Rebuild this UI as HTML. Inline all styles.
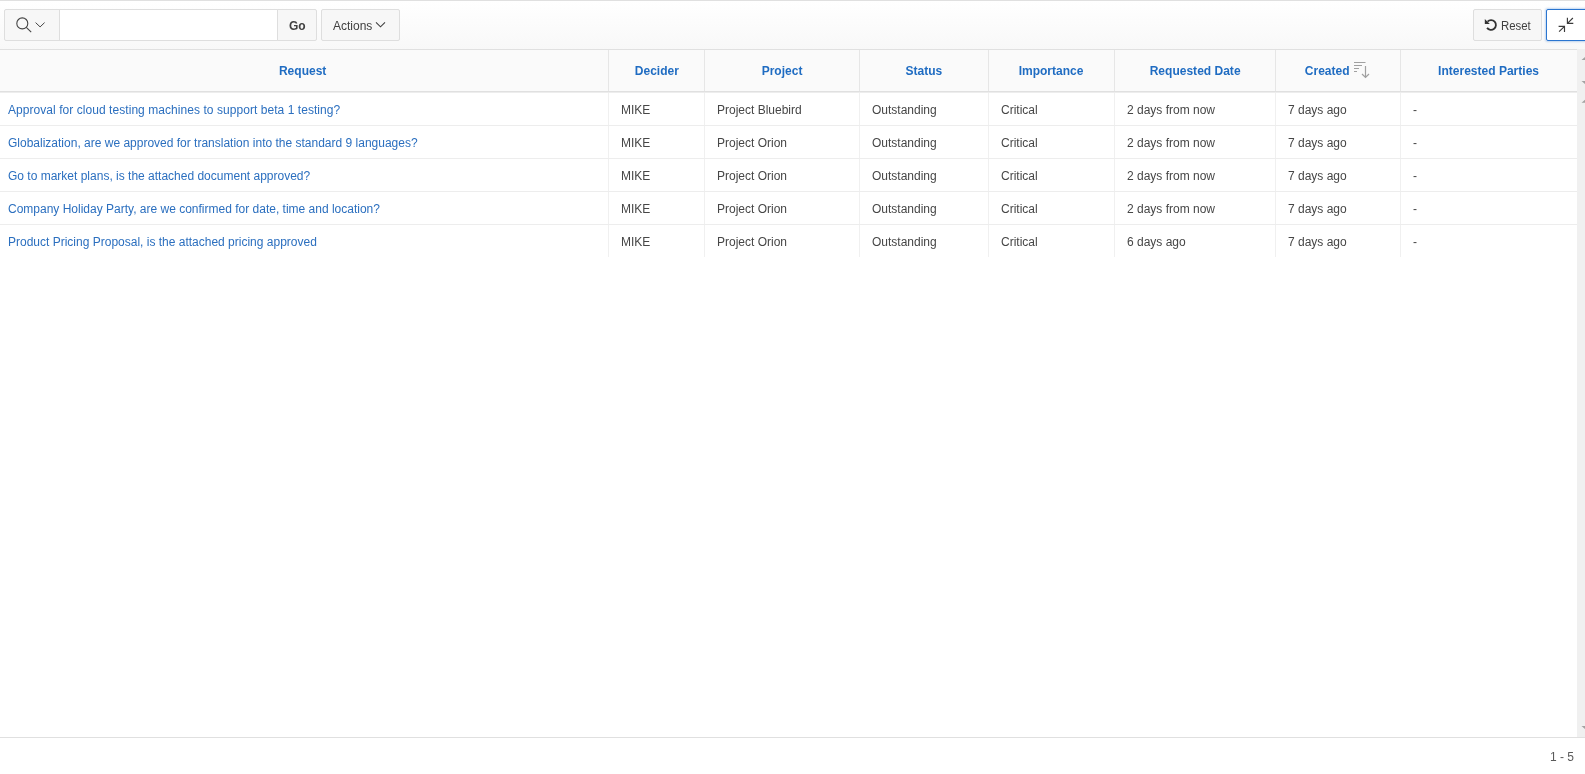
<!DOCTYPE html>
<html><head><meta charset="utf-8">
<style>
*{box-sizing:border-box;margin:0;padding:0}
html,body{width:1585px;height:774px;overflow:hidden;background:#fff;font-family:"Liberation Sans",sans-serif;color:#404040}
.abs{position:absolute}
#topline{left:0;top:0;width:1585px;height:1px;background:#e0e0e0}
#toolbar{left:0;top:1px;width:1585px;height:48px;background:linear-gradient(#fff,#f8f8f8)}
.btn{position:absolute;top:9px;height:32px;border:1px solid #dedede;background:#f7f7f7;border-radius:2px}
#hdrline{left:0;top:49px;width:1577px;height:1px;background:#e0e0e0}
#hdr{left:0;top:50px;width:1577px;height:41px;background:#fafafa}
#hdrbot{left:0;top:91px;width:1577px;height:2px;background:linear-gradient(#e0e0e0 50%,#ededed 50%)}
.th{position:absolute;top:50px;height:41px;font-weight:bold;font-size:13px;color:#1f6cc2;line-height:41px;text-align:center;white-space:nowrap}
.tht{display:inline-block;transform:scaleX(0.925)}
.sorticon{position:absolute;left:1350px;top:58px}
.vl{position:absolute;width:1px;background:#f0f0f0}
.vlh{background:#e6e6e6}
.hl{position:absolute;height:1px;background:#ededed;left:0;width:1577px}
.td{position:absolute;font-size:12px;white-space:nowrap;line-height:32px;color:#464646}
.lnk{color:#2b6fbf}
#sb1{left:1577px;top:49px;width:8px;height:43px;background:#f0f0f0}
#sb2{left:1577px;top:92px;width:8px;height:645px;background:#f0f0f0}
#footline{left:0;top:737px;width:1585px;height:1px;background:#e0e0e0}
.btxt{font-size:12px;line-height:32px;color:#404040;white-space:nowrap}
.sx{display:inline-block;transform:scaleX(0.9);transform-origin:0 50%}
#wrap{position:absolute;left:0;top:0;width:1585px;height:774px;overflow:hidden;will-change:transform}
</style></head><body><div id="wrap">
<div class="abs" id="topline"></div>
<div class="abs" id="toolbar"></div>
<div class="btn" style="left:4px;width:57px;border-radius:2px 0 0 2px"></div>
<svg class="abs" style="left:14px;top:15px" width="34" height="20" viewBox="14 15 34 20"><circle cx="22.3" cy="23.4" r="5.5" fill="none" stroke="#444" stroke-width="1.1"/><path d="M26.3 27.4L31.2 32.1" stroke="#444" stroke-width="1.1"/><path d="M35.6 22.6L40.1 26.9L44.6 22.6" fill="none" stroke="#444" stroke-width="1"/></svg>
<div class="abs" style="left:59px;top:9px;width:219px;height:32px;background:#fff;border:1px solid #dedede;border-right:0"></div>
<div class="btn" style="left:277px;width:40px;border-radius:0 2px 2px 0"></div>
<div class="abs btxt" style="left:289px;top:10px;font-weight:bold">Go</div>
<div class="btn" style="left:321px;width:79px"></div>
<div class="abs btxt" style="left:333px;top:10px">Actions</div>
<svg class="abs" style="left:374px;top:20px" width="14" height="10" viewBox="374 20 14 10"><path d="M376 22.3L380.5 26.8L385 22.3" fill="none" stroke="#404040" stroke-width="1.1"/></svg>
<div class="btn" style="left:1473px;width:69px"></div>
<svg class="abs" style="left:1482px;top:16px" width="18" height="18" viewBox="1482 16 18 18"><path d="M1487.54 21.54A4.9 4.9 0 1 1 1487.04 27.88" fill="none" stroke="#333" stroke-width="1.8"/><path d="M1484.8 19L1484.8 24L1489.8 24Z" fill="#333"/></svg>
<div class="abs btxt" style="left:1501px;top:10px"><span class="sx" style="transform:scaleX(0.95)">Reset</span></div>
<div class="btn" style="left:1546px;width:50px;border-color:#2a75d0;background:#fff;box-shadow:0 0 2px 1px rgba(42,117,208,0.28)"></div>
<svg class="abs" style="left:1554px;top:14px" width="24" height="22" viewBox="1554 14 24 22"><path d="M1567.4 17.7V23.3H1573.3M1567.4 23.3L1572.9 18" fill="none" stroke="#3a3a3a" stroke-width="1.15"/><path d="M1558.6 26.4H1564.5V31.9M1564.5 26.4L1559.1 31.7" fill="none" stroke="#3a3a3a" stroke-width="1.15"/></svg>
<div class="abs" id="hdrline"></div>
<div class="abs" id="hdr"></div>
<div class="abs" id="hdrbot"></div>
<div class="th" style="left:0px;width:606px"><span class="tht">Request</span></div>
<div class="th" style="left:609px;width:95px"><span class="tht">Decider</span></div>
<div class="th" style="left:705px;width:154px"><span class="tht">Project</span></div>
<div class="th" style="left:860px;width:128px"><span class="tht">Status</span></div>
<div class="th" style="left:989px;width:125px"><span class="tht">Importance</span></div>
<div class="th" style="left:1115px;width:160px"><span class="tht">Requested Date</span></div>
<div class="th" style="left:1276px;width:124px;padding-right:21px"><span class="tht">Created</span></div>
<svg class="sorticon" width="22" height="22" viewBox="1350 58 22 22"><path d="M1354 62.5H1365.5M1354 65.5H1362M1354 68.5H1359M1354 71.5H1357" stroke="#a0a0a0" stroke-width="1"/><path d="M1365.5 66V77.5M1362 74L1365.5 77.5L1369 74" stroke="#a0a0a0" stroke-width="1.2" fill="none"/></svg>
<div class="th" style="left:1401px;width:176px"><span class="tht">Interested Parties</span></div>
<div class="vl vlh" style="left:608px;top:50px;height:41px"></div>
<div class="vl" style="left:608px;top:93px;height:164px"></div>
<div class="vl vlh" style="left:704px;top:50px;height:41px"></div>
<div class="vl" style="left:704px;top:93px;height:164px"></div>
<div class="vl vlh" style="left:859px;top:50px;height:41px"></div>
<div class="vl" style="left:859px;top:93px;height:164px"></div>
<div class="vl vlh" style="left:988px;top:50px;height:41px"></div>
<div class="vl" style="left:988px;top:93px;height:164px"></div>
<div class="vl vlh" style="left:1114px;top:50px;height:41px"></div>
<div class="vl" style="left:1114px;top:93px;height:164px"></div>
<div class="vl vlh" style="left:1275px;top:50px;height:41px"></div>
<div class="vl" style="left:1275px;top:93px;height:164px"></div>
<div class="vl vlh" style="left:1400px;top:50px;height:41px"></div>
<div class="vl" style="left:1400px;top:93px;height:164px"></div>
<div class="hl" style="top:125px"></div>
<div class="hl" style="top:158px"></div>
<div class="hl" style="top:191px"></div>
<div class="hl" style="top:224px"></div>
<div class="td lnk" style="left:8px;top:94px;letter-spacing:0.055px">Approval for cloud testing machines to support beta 1 testing?</div>
<div class="td" style="left:621px;top:94px">MIKE</div>
<div class="td" style="left:717px;top:94px">Project Bluebird</div>
<div class="td" style="left:872px;top:94px">Outstanding</div>
<div class="td" style="left:1001px;top:94px">Critical</div>
<div class="td" style="left:1127px;top:94px">2 days from now</div>
<div class="td" style="left:1288px;top:94px">7 days ago</div>
<div class="td" style="left:1413px;top:94px">-</div>
<div class="td lnk" style="left:8px;top:127px">Globalization, are we approved for translation into the standard 9 languages?</div>
<div class="td" style="left:621px;top:127px">MIKE</div>
<div class="td" style="left:717px;top:127px">Project Orion</div>
<div class="td" style="left:872px;top:127px">Outstanding</div>
<div class="td" style="left:1001px;top:127px">Critical</div>
<div class="td" style="left:1127px;top:127px">2 days from now</div>
<div class="td" style="left:1288px;top:127px">7 days ago</div>
<div class="td" style="left:1413px;top:127px">-</div>
<div class="td lnk" style="left:8px;top:160px">Go to market plans, is the attached document approved?</div>
<div class="td" style="left:621px;top:160px">MIKE</div>
<div class="td" style="left:717px;top:160px">Project Orion</div>
<div class="td" style="left:872px;top:160px">Outstanding</div>
<div class="td" style="left:1001px;top:160px">Critical</div>
<div class="td" style="left:1127px;top:160px">2 days from now</div>
<div class="td" style="left:1288px;top:160px">7 days ago</div>
<div class="td" style="left:1413px;top:160px">-</div>
<div class="td lnk" style="left:8px;top:193px">Company Holiday Party, are we confirmed for date, time and location?</div>
<div class="td" style="left:621px;top:193px">MIKE</div>
<div class="td" style="left:717px;top:193px">Project Orion</div>
<div class="td" style="left:872px;top:193px">Outstanding</div>
<div class="td" style="left:1001px;top:193px">Critical</div>
<div class="td" style="left:1127px;top:193px">2 days from now</div>
<div class="td" style="left:1288px;top:193px">7 days ago</div>
<div class="td" style="left:1413px;top:193px">-</div>
<div class="td lnk" style="left:8px;top:226px">Product Pricing Proposal, is the attached pricing approved</div>
<div class="td" style="left:621px;top:226px">MIKE</div>
<div class="td" style="left:717px;top:226px">Project Orion</div>
<div class="td" style="left:872px;top:226px">Outstanding</div>
<div class="td" style="left:1001px;top:226px">Critical</div>
<div class="td" style="left:1127px;top:226px">6 days ago</div>
<div class="td" style="left:1288px;top:226px">7 days ago</div>
<div class="td" style="left:1413px;top:226px">-</div>
<div class="abs" id="sb1"></div>
<div class="abs" id="sb2"></div>
<svg class="abs" style="left:1577px;top:49px" width="8" height="688" viewBox="1577 49 8 688"><path d="M1581.5 60L1585.5 56.5L1589.5 60Z M1581.5 81L1585.5 84.5L1589.5 81Z M1581.5 102.8L1585.5 99.3L1589.5 102.8Z M1581.5 726L1585.5 729.5L1589.5 726Z" fill="#a3a3a3"/></svg>
<div class="abs" id="footline"></div>
<div class="abs" style="left:1550px;top:745px;font-size:12px;line-height:24px;color:#5a5a5a;white-space:nowrap">1 - 5</div>
</div></body></html>
